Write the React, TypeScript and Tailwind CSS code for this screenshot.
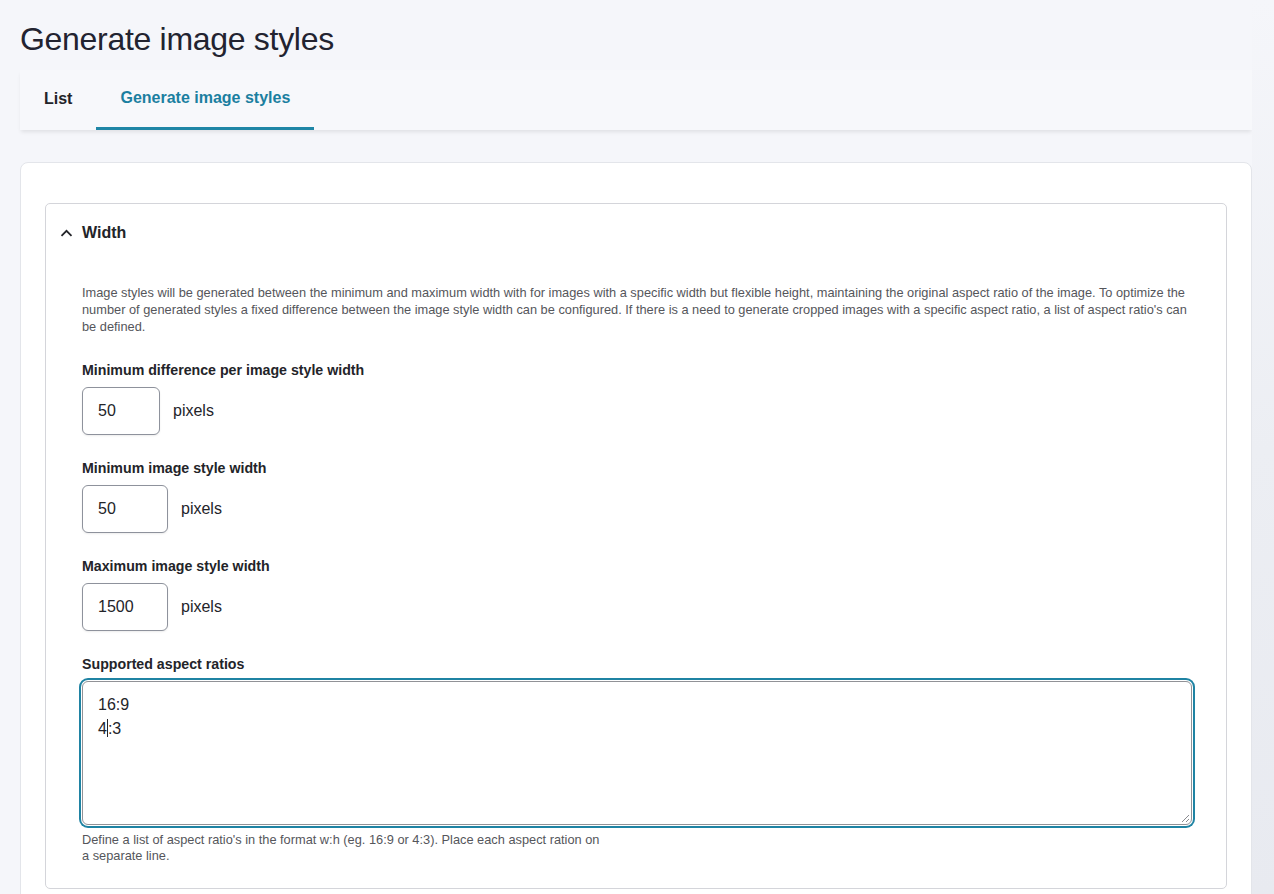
import React from "react";

interface FieldProps {
    label: string;
    value: string;
    inputWidth: string;
}

const NumberField = (props: FieldProps) => {
    return (
        <div className="mt-[24px]">
            <label className="block text-[14.2px] font-bold leading-[18px] text-[#232429]">{props.label}</label>
            <div className="flex items-center mt-[8px]">
                <input
                    type="text"
                    defaultValue={props.value}
                    className={`${props.inputWidth} h-[48px] rounded-[6px] border border-[#8e929c] bg-white px-[15px] text-[16px] text-[#232429] outline-none shadow-[0_1px_2px_rgba(0,0,0,0.08)]`}
                />
                <span className="ml-[13px] text-[16px] text-[#232429]">pixels</span>
            </div>
        </div>
    )
}

const App = () => {
    return (
        <div className="flex min-h-[894px] bg-[#f5f6fa] font-['Liberation_Sans',Arial,sans-serif]">

            <div className="w-[1252px] shrink-0 pl-[20px]">

                <h1 className="pt-[20px] text-[32px] leading-[38px] font-normal tracking-[-0.3px] text-[#222330]">Generate image styles</h1>

                <div className="mt-[12px] h-[60px] flex items-end bg-[#f7f8fb] shadow-[0_3px_4px_-1px_rgba(0,0,0,0.09)]">
                    <div className="px-[24px] pb-[19px] text-[16px] font-bold text-[#232429]">List</div>
                    <div className="px-[24px] pb-[17px] text-[16px] font-bold text-[#1b7fa0] border-b-[3px] border-[#1f86a6]">Generate image styles</div>
                </div>

                <div className="mt-[32px] rounded-t-[8px] border border-[#e3e5ea] bg-white px-[24px] pt-[40px] pb-[12px]">

                    <div className="rounded-[5px] border border-[#d4d5da]">

                        <div className="flex items-center h-[58px] pl-[14px]">
                            <svg width="13" height="8" viewBox="0 0 13 8" className="mr-[9px]">
                                <path d="M1.5 6.8 L6.5 1.8 L11.5 6.8" fill="none" stroke="#232429" strokeWidth="1.8" />
                            </svg>
                            <span className="text-[16px] font-bold text-[#232429]">Width</span>
                        </div>

                        <div className="pl-[36px] pr-[34px] pt-[22px] pb-[24px]">

                            <p className="pb-[2px] text-[12.8px] leading-[17px] text-[#55565b]">
                                Image styles will be generated between the minimum and maximum width with for images with a specific width but flexible height, maintaining the original aspect ratio of the image. To optimize the<br />
                                number of generated styles a fixed difference between the image style width can be configured. If there is a need to generate cropped images with a specific aspect ratio, a list of aspect ratio's can<br />
                                be defined.
                            </p>

                            <NumberField label="Minimum difference per image style width" value="50" inputWidth="w-[78px]" />
                            <NumberField label="Minimum image style width" value="50" inputWidth="w-[86px]" />
                            <NumberField label="Maximum image style width" value="1500" inputWidth="w-[86px]" />

                            <div className="mt-[24px]">
                                <label className="block text-[14.2px] font-bold leading-[18px] text-[#232429]">Supported aspect ratios</label>
                                <div className="relative mt-[8px] h-[144px] rounded-[6px] border border-[#919297] bg-white px-[15px] py-[11px] text-[16px] leading-[24px] text-[#232429] shadow-[0_0_0_1px_#ffffff,0_0_0_3px_#1f83a3]">
                                    <div>16:9</div>
                                    <div>4<span className="inline-block w-[1px] h-[18px] align-[-3px] bg-[#232429]"></span>:3</div>
                                    <svg width="9" height="9" viewBox="0 0 9 9" className="absolute right-[1px] bottom-[1px]">
                                        <path d="M8 1 L1 8 M8 5 L5 8" stroke="#8a8b90" strokeWidth="1" />
                                    </svg>
                                </div>
                                <p className="mt-[7px] text-[12.8px] leading-[16px] text-[#55565b]">
                                    Define a list of aspect ratio's in the format w:h (eg. 16:9 or 4:3). Place each aspect ration on<br />
                                    a separate line.
                                </p>
                            </div>

                        </div>
                    </div>

                </div>

            </div>

            <div className="flex-1 bg-gradient-to-b from-[#f5f6fa] via-[#eceef3] to-[#e8eaf0]"></div>

        </div>
    )
}

export default App
